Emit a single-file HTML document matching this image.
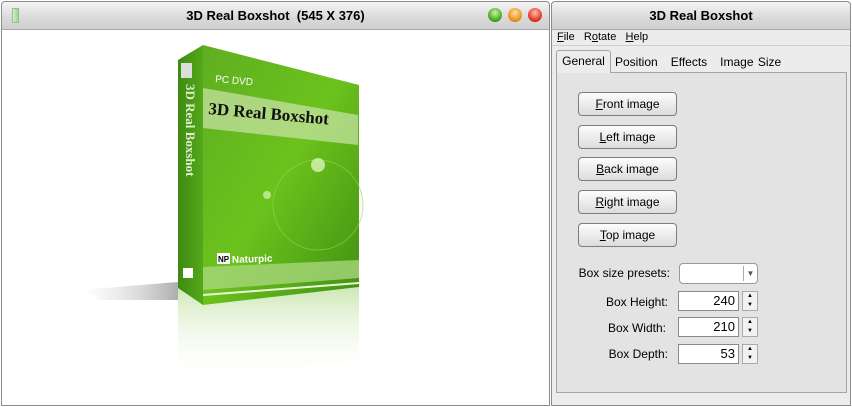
<!DOCTYPE html>
<html><head><meta charset="utf-8"><style>
*{box-sizing:border-box;margin:0;padding:0}
body{width:852px;height:407px;background:#fff;font-family:"Liberation Sans",sans-serif;font-size:12px;color:#000;position:relative;overflow:hidden}
.abs{position:absolute}
.title{background:linear-gradient(#f4f4f4,#d9d9d9 60%,#cfcfcf);border-bottom:1px solid #aaa;font-weight:bold;font-size:13px;text-align:center;line-height:28px;height:28px}
.btn{position:absolute;left:578px;width:99px;height:24px;border:1px solid #7d7d7d;border-radius:4px;background:linear-gradient(#fdfdfd,#ececec 50%,#dcdcdc);text-align:center;line-height:22px;font-size:12px}
.lbl{position:absolute;font-size:12px;text-align:right;width:90px;white-space:nowrap}
.inp{position:absolute;left:678px;width:61px;height:20px;border:1px solid #8a8a8a;background:#fff;text-align:right;padding-right:3px;line-height:18px;font-size:13px}
.spin{position:absolute;left:742px;width:16px;height:20px;border:1px solid #aaa;background:#f2f2f2;font-size:6px;line-height:9px;text-align:center}
u{text-decoration:underline}
</style></head><body>
<div class="abs" style="left:1px;top:1px;width:549px;height:405px;border:1px solid #8c8c8c;border-radius:4px 4px 0 0;background:#fff"></div>
<div class="abs title" style="left:2px;top:2px;width:547px;border-radius:4px 4px 0 0">3D Real Boxshot&nbsp; (545 X 376)</div>
<div class="abs" style="left:12px;top:8px;width:7px;height:15px;background:linear-gradient(90deg,#d8f0c8,#9fd08a);border:1px solid #9b9;"></div>
<div class="abs" style="left:488px;top:8px;width:14px;height:14px;border-radius:50%;background:radial-gradient(circle at 50% 35%,#c8f5a0,#38a018 70%,#206010)"></div>
<div class="abs" style="left:508px;top:8px;width:14px;height:14px;border-radius:50%;background:radial-gradient(circle at 50% 35%,#ffe0a0,#e88a10 70%,#a05000)"></div>
<div class="abs" style="left:528px;top:8px;width:14px;height:14px;border-radius:50%;background:radial-gradient(circle at 50% 35%,#ffc0b0,#e02818 70%,#901000)"></div>

<svg class="abs" style="left:0;top:0" width="550" height="407">
<defs>
<linearGradient id="fr" x1="0" y1="0" x2="1" y2="1"><stop offset="0" stop-color="#5fae22"/><stop offset=".5" stop-color="#6cc21c"/><stop offset="1" stop-color="#3f8f12"/></linearGradient>
<linearGradient id="sp" x1="0" x2="1"><stop offset="0" stop-color="#3e8a12"/><stop offset="1" stop-color="#55a81a"/></linearGradient>
<linearGradient id="sh" x1="1" x2="0"><stop offset="0" stop-color="#777" stop-opacity=".6"/><stop offset="1" stop-color="#ccc" stop-opacity="0"/></linearGradient>
<linearGradient id="rf" x1="0" y1="0" x2="0" y2="1"><stop offset="0" stop-color="#9bd06a" stop-opacity=".5"/><stop offset="1" stop-color="#fff" stop-opacity="0"/></linearGradient>
</defs>
<polygon points="178,282 80,290 100,300 178,300" fill="url(#sh)"/>
<polygon points="178,288 203,305 359,287 359,360 203,380 178,370" fill="url(#rf)"/>
<polygon points="178,60 203,45 203,305 178,288" fill="url(#sp)"/>
<polygon points="203,45 359,85 359,287 203,305" fill="url(#fr)"/>
<polygon points="203,88 358,115 358,145 203,128" fill="#c4e2a0" opacity=".75"/>
<polygon points="203,267 359,260 359,278 203,290" fill="#a6d67a" opacity=".8"/>
<line x1="203" y1="295" x2="359" y2="283" stroke="#e8f6d8" stroke-width="2"/>
<circle cx="318" cy="205" r="45" fill="none" stroke="#8fda50" stroke-width="1" opacity=".6"/>
<circle cx="318" cy="165" r="7" fill="#d8f5b8" opacity=".8"/>
<circle cx="267" cy="195" r="4" fill="#d8f5b8" opacity=".7"/>
<text x="215" y="82" font-family="Liberation Sans" font-size="10" fill="#fff" transform="rotate(5 215 82)">PC DVD</text>
<text x="208" y="114" font-family="Liberation Serif" font-weight="bold" font-size="17" fill="#111" transform="rotate(5 208 114)">3D Real Boxshot</text>
<text x="232" y="263" font-family="Liberation Sans" font-weight="bold" font-size="10" fill="#fff" transform="rotate(-2 232 263)">Naturpic</text>
<rect x="217" y="253" width="13" height="11" fill="#fff"/>
<text x="218" y="262" font-family="Liberation Sans" font-weight="bold" font-size="8" fill="#000">NP</text>
<text x="186" y="84" font-family="Liberation Serif" font-weight="bold" font-size="13" fill="#dcefc8" transform="rotate(90 186 84)">3D Real Boxshot</text>
<rect x="181" y="63" width="11" height="15" fill="#ddd"/>
<rect x="183" y="268" width="10" height="10" fill="#fff"/>
</svg>

<div class="abs" style="left:551px;top:1px;width:300px;height:405px;border:1px solid #8c8c8c;border-radius:4px 4px 0 0;background:#ececec"></div>
<div class="abs title" style="left:552px;top:2px;width:298px;border-radius:4px 4px 0 0">3D Real Boxshot</div>
<div class="abs" style="left:557px;top:31px;font-size:11px"><u>F</u>ile&nbsp;&nbsp; R<u>o</u>tate&nbsp;&nbsp; <u>H</u>elp</div>
<div class="abs" style="left:552px;top:45px;width:298px;border-top:1px solid #cfcfcf"></div>
<div class="abs" style="left:556px;top:72px;width:291px;height:321px;border:1px solid #a5a5a5;background:#e3e3e3"></div>
<div class="abs" style="left:556px;top:50px;width:55px;height:23px;border:1px solid #a5a5a5;border-bottom:none;border-radius:3px 3px 0 0;background:#ececec;text-align:center;line-height:20px">General</div>
<div class="abs" style="left:615px;top:55px;word-spacing:1px">Position&nbsp;&nbsp; Effects&nbsp;&nbsp; Image Size</div>

<div class="btn" style="top:92px"><u>F</u>ront image</div>
<div class="btn" style="top:125px"><u>L</u>eft image</div>
<div class="btn" style="top:157px"><u>B</u>ack image</div>
<div class="btn" style="top:190px"><u>R</u>ight image</div>
<div class="btn" style="top:223px"><u>T</u>op image</div>

<div class="lbl" style="left:570px;top:266px;width:100px">Box size presets:</div>
<div class="abs" style="left:679px;top:263px;width:79px;height:21px;border:1px solid #999;border-radius:4px;background:#fff"></div>
<div class="abs" style="left:743px;top:266px;height:15px;border-left:1px solid #aaa;width:14px;text-align:center;font-size:8px;color:#555;line-height:15px">▼</div>

<div class="lbl" style="left:578px;top:295px">Box Height:</div>
<div class="inp" style="top:291px">240</div>
<div class="spin" style="top:291px">▲<br>▼</div>
<div class="lbl" style="left:576px;top:321px">Box Width:</div>
<div class="inp" style="top:317px">210</div>
<div class="spin" style="top:317px">▲<br>▼</div>
<div class="lbl" style="left:578px;top:347px">Box Depth:</div>
<div class="inp" style="top:344px">53</div>
<div class="spin" style="top:344px">▲<br>▼</div>
</body></html>
